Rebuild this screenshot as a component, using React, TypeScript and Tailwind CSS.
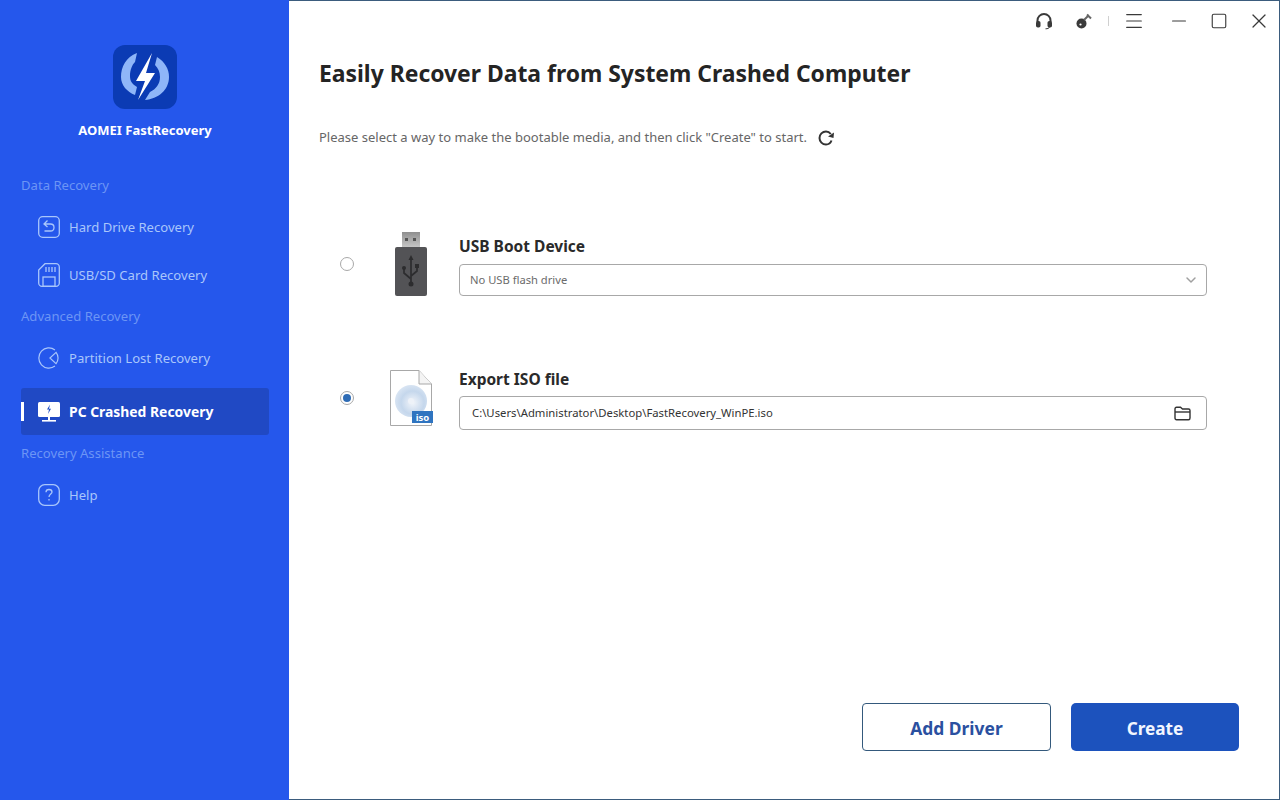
import { Minus, Square, X, Menu, ChevronDown } from "lucide-react";

const FONT = "font-['Noto_Sans','Open_Sans',sans-serif]";

function Logo() {
  return (
    <svg width="64" height="64" viewBox="0 0 64 64">
      <rect width="64" height="64" rx="12" fill="#0b3bb4" />
      <path d="M24 8C13 12 8 22 8 32C8 40 14 47 22 50L24 42C19 39 17 36 17 31C17 25 19 20 22 17Z" fill="#8fb6f8" />
      <path d="M44 12C52 17 56 24 56 32C56 45 45 54 32 55L37 47C43 44 47 39 47 32C47 27 45 23 42 20Z" fill="#8fb6f8" />
      <path d="M39 8L23 36H32L25 55L42 28H33Z" fill="#fff" />
    </svg>
  );
}

function HardDriveIcon() {
  return (
    <svg width="22" height="22" viewBox="0 0 22 22" fill="none" stroke="#a9c6fb" strokeWidth="1.3">
      <rect x="0.7" y="0.7" width="20.6" height="20.6" rx="4" />
      <path d="M9.5 4.5L6 8L9.5 11M6 8H12.5C14.7 8 16 9.6 16 11.5C16 13.4 14.7 15 12.5 15H6.5" />
    </svg>
  );
}

function SdCardIcon() {
  return (
    <svg width="22" height="24" viewBox="0 0 22 24" fill="none" stroke="#a9c6fb" strokeWidth="1.3">
      <path d="M7 0.7H18C19.8 0.7 21.3 2.2 21.3 4V20C21.3 21.8 19.8 23.3 18 23.3H4C2.2 23.3 0.7 21.8 0.7 20V7Z" />
      <path d="M8 4V9M11 4V9M14 4V9M17 4V9" />
      <rect x="5" y="14" width="12" height="9.3" />
    </svg>
  );
}

function PartitionIcon() {
  return (
    <svg width="24" height="24" viewBox="0 0 24 24" fill="none" stroke="#a9c6fb" strokeWidth="1.3">
      <path d="M18.5 3.2A11 11 0 1 0 18.5 20.8" />
      <path d="M19.7 5.8L13 12L19.7 18.2C22.6 14.6 22.6 9.4 19.7 5.8Z" />
    </svg>
  );
}

function MonitorIcon() {
  return (
    <svg width="22" height="20" viewBox="0 0 22 20">
      <rect width="22" height="15" rx="1.5" fill="#fff" />
      <rect x="10" y="15" width="2" height="3" fill="#fff" />
      <rect x="4" y="18" width="14" height="1.6" fill="#fff" />
      <path d="M12 2.5L9 7.5H11L10 12L13 6.8H11Z" fill="#1f4fc4" />
    </svg>
  );
}

function HelpIcon() {
  return (
    <svg width="22" height="22" viewBox="0 0 22 22" fill="none" stroke="#a9c6fb" strokeWidth="1.3">
      <rect x="0.7" y="0.7" width="20.6" height="20.6" rx="6" />
      <path d="M8 8.3C8 6.6 9.3 5.5 11 5.5C12.7 5.5 14 6.6 14 8C14 10 11 10.2 11 13" />
      <path d="M11 15V16.5" />
    </svg>
  );
}

function HeadsetIcon() {
  return (
    <svg width="18" height="18" viewBox="0 0 18 18" fill="none">
      <path d="M2.5 10V8.5C2.5 4.8 5.4 2 9 2C12.6 2 15.5 4.8 15.5 8.5V10" stroke="#3a3a3a" strokeWidth="2" />
      <rect x="1" y="9" width="4.5" height="6.5" rx="1.8" fill="#3a3a3a" />
      <rect x="12.5" y="9" width="4.5" height="6.5" rx="1.8" fill="#3a3a3a" />
      <path d="M14.5 15C14 16.3 12.8 16.8 10.5 16.8" stroke="#3a3a3a" strokeWidth="1" />
    </svg>
  );
}

function KeyIcon() {
  return (
    <svg width="16" height="16" viewBox="0 0 16 16">
      <circle cx="5.5" cy="10.5" r="5" fill="#3a3a3a" />
      <circle cx="4.5" cy="11.5" r="1.1" fill="#fff" />
      <path d="M8 7L13 2M11 1.5L15 5.5" stroke="#666" strokeWidth="2" fill="none" />
    </svg>
  );
}

function RefreshIcon() {
  return (
    <svg width="18" height="18" viewBox="0 0 18 18" fill="none">
      <path d="M14.5 11.5C13.6 14 11.5 15.5 9 15.5C5.4 15.5 2.5 12.6 2.5 9C2.5 5.4 5.4 2.5 9 2.5C11 2.5 12.6 3.4 13.8 5" stroke="#333" strokeWidth="2" />
      <path d="M17 3.5L16.5 9L11 7.5Z" fill="#333" />
    </svg>
  );
}

function FolderIcon() {
  return (
    <svg width="17" height="15" viewBox="0 0 17 15" fill="none" stroke="#333" strokeWidth="1.4">
      <path d="M1 3C1 1.9 1.7 1.2 2.5 1.2H6.5L8.5 3H14.5C15.4 3 16 3.7 16 4.6V12C16 13.1 15.3 13.8 14.5 13.8H2.5C1.7 13.8 1 13.1 1 12Z" />
      <path d="M1 6H16" />
    </svg>
  );
}

function UsbDrive() {
  return (
    <svg width="34" height="64" viewBox="0 0 34 64">
      <defs>
        <linearGradient id="plug" x1="0" y1="0" x2="0" y2="1">
          <stop offset="0" stopColor="#8f8f8f" />
          <stop offset="1" stopColor="#c9c9c9" />
        </linearGradient>
      </defs>
      <rect x="8" y="0" width="18" height="16" fill="url(#plug)" />
      <rect x="11" y="6" width="3" height="3" fill="#555" />
      <rect x="19" y="6" width="3" height="3" fill="#555" />
      <rect x="1" y="15" width="32" height="49" rx="2" fill="#535356" />
      <g stroke="#2c2c2e" strokeWidth="1.7" fill="none">
        <path d="M17 26V52M17 47L10 41V37M17 44L23 39V35" />
      </g>
      <circle cx="17" cy="52" r="2.5" fill="#2c2c2e" />
      <circle cx="10" cy="36" r="2" fill="#2c2c2e" />
      <rect x="21" y="32" width="4" height="4" fill="#2c2c2e" />
      <path d="M17 23L14.5 28H19.5Z" fill="#2c2c2e" />
    </svg>
  );
}

function IsoFile() {
  return (
    <svg width="44" height="58" viewBox="0 0 44 58">
      <defs>
        <radialGradient id="disc" cx="0.55" cy="0.55" r="0.6">
          <stop offset="0" stopColor="#f2f5fa" />
          <stop offset="0.6" stopColor="#c5d7ec" />
          <stop offset="1" stopColor="#dce7f4" />
        </radialGradient>
      </defs>
      <path d="M0.5 0.5H29L41.5 14V55.5H0.5Z" fill="#fff" stroke="#a8a8a8" />
      <path d="M29 0.5V14H41.5" fill="#f4f4f4" stroke="#a8a8a8" />
      <circle cx="21" cy="31" r="16" fill="url(#disc)" />
      <circle cx="21" cy="31" r="3" fill="#eef2f8" />
      <rect x="22" y="41" width="21" height="12" fill="#2f74c0" />
      <text x="32.5" y="50.5" textAnchor="middle" fontSize="9.5" fontWeight="700" fill="#fff" fontFamily="Noto Sans, sans-serif">iso</text>
    </svg>
  );
}

function NavItem({ icon, label, active }: { icon: React.ReactNode; label: string; active?: boolean }) {
  if (active) {
    return (
      <div className="relative flex items-center h-[47px] w-[248px] mt-[6px] pl-[17px] gap-[9px] rounded-[3px] bg-[#2049c4]">
        <div className="absolute left-0 top-[14px] w-[3px] h-[19px] bg-white" />
        <div className="w-[22px] flex justify-center">{icon}</div>
        <span className="pt-[2px] text-[13.9px] font-bold text-white">{label}</span>
      </div>
    );
  }
  return (
    <div className="flex items-center h-[48px] pl-[17px] gap-[9px]">
      <div className="w-[22px] flex justify-center">{icon}</div>
      <span className="pt-[2px] text-[13.1px] text-[#a9c6fb]">{label}</span>
    </div>
  );
}

function SectionLabel({ text, className }: { text: string; className?: string }) {
  return <div className={`text-[13.1px] leading-[18px] mb-[9px] text-[#6c95f5] ${className ?? ""}`}>{text}</div>;
}

export default function App() {
  return (
    <div className={`flex w-[1280px] h-[800px] overflow-hidden bg-white ${FONT}`}>
      <aside className="flex flex-col w-[289px] h-full shrink-0 bg-[#2557ec] pl-[21px]">
        <div className="flex flex-col items-center w-[248px] pt-[45px]">
          <Logo />
          <div className="mt-[12px] text-[13px] leading-[18px] font-bold text-white">AOMEI FastRecovery</div>
        </div>
        <SectionLabel text="Data Recovery" className="mt-[37px]" />
        <NavItem icon={<HardDriveIcon />} label="Hard Drive Recovery" />
        <NavItem icon={<SdCardIcon />} label="USB/SD Card Recovery" />
        <SectionLabel text="Advanced Recovery" className="mt-[8px]" />
        <NavItem icon={<PartitionIcon />} label="Partition Lost Recovery" />
        <NavItem icon={<MonitorIcon />} label="PC Crashed Recovery" active />
        <SectionLabel text="Recovery Assistance" className="mt-[9px]" />
        <NavItem icon={<HelpIcon />} label="Help" />
      </aside>

      <main className="flex flex-col flex-1 min-w-0 border-t border-r border-b border-[#3b5c7d]">
        <div className="flex items-center justify-end h-[40px] pr-[8px] text-[#3a3a3a]">
          <HeadsetIcon />
          <div className="ml-[23px]"><KeyIcon /></div>
          <div className="ml-[16px] w-px h-[10px] bg-[#d0d0d0]" />
          <Menu size={22} strokeWidth={1.2} className="ml-[14px]" />
          <Minus size={22} strokeWidth={1.3} className="ml-[23px]" />
          <Square size={18} strokeWidth={1.5} className="ml-[20px]" />
          <X size={24} strokeWidth={1.2} className="ml-[19px]" />
        </div>

        <div className="pl-[30px] mt-[16px]">
          <h1 className="text-[22.9px] leading-[34px] font-bold text-[#242424]">Easily Recover Data from System Crashed Computer</h1>
          <div className="flex items-center mt-[37px] h-[20px]">
            <span className="text-[13px] text-[#666]">Please select a way to make the bootable media, and then click "Create" to start.</span>
            <div className="ml-[10px]"><RefreshIcon /></div>
          </div>
        </div>

        <div className="flex items-start mt-[88px] pl-[51px]">
          <div className="mt-[21px] w-[14px] h-[14px] rounded-full border border-[#a8a8a8] bg-white" />
          <div className="ml-[35px] mt-[-4px] w-[44px] flex justify-center"><UsbDrive /></div>
          <div className="ml-[26px] w-[748px]">
            <div className="text-[15.5px] leading-[20px] font-bold text-[#2a2a2a]">USB Boot Device</div>
            <div className="mt-[8px] flex items-center justify-between h-[32px] pl-[10px] pr-[7px] border border-[#a8a8a8] rounded-[4px]">
              <span className="text-[11.2px] text-[#6b6b6b]">No USB flash drive</span>
              <ChevronDown size={16} strokeWidth={2.2} className="text-[#a0a0a0]" />
            </div>
          </div>
        </div>

        <div className="flex items-start mt-[73px] pl-[51px]">
          <div className="mt-[22px] flex items-center justify-center w-[14px] h-[14px] rounded-full border border-[#a8a8a8] bg-white">
            <div className="w-[8px] h-[8px] rounded-full bg-[#2f6cb5]" />
          </div>
          <div className="ml-[36px] mt-[1px] w-[44px]"><IsoFile /></div>
          <div className="ml-[25px] w-[748px]">
            <div className="text-[15.5px] leading-[20px] font-bold text-[#2a2a2a]">Export ISO file</div>
            <div className="mt-[7px] flex items-center justify-between h-[34px] pl-[12px] pr-[15px] border border-[#a8a8a8] rounded-[4px]">
              <span className="text-[11.3px] text-[#333]">C:\Users\Administrator\Desktop\FastRecovery_WinPE.iso</span>
              <FolderIcon />
            </div>
          </div>
        </div>

        <div className="flex justify-end gap-[20px] mt-auto mb-[48px] pr-[40px]">
          <button className="w-[189px] h-[48px] pt-[3px] rounded-[4px] border border-[#34597c] bg-white text-[17.4px] font-bold text-[#2a50a0]">Add Driver</button>
          <button className="w-[168px] h-[48px] pt-[3px] rounded-[5px] bg-[#1c52bd] text-[17.2px] font-bold text-[#f2f6ff]">Create</button>
        </div>
      </main>
    </div>
  );
}
